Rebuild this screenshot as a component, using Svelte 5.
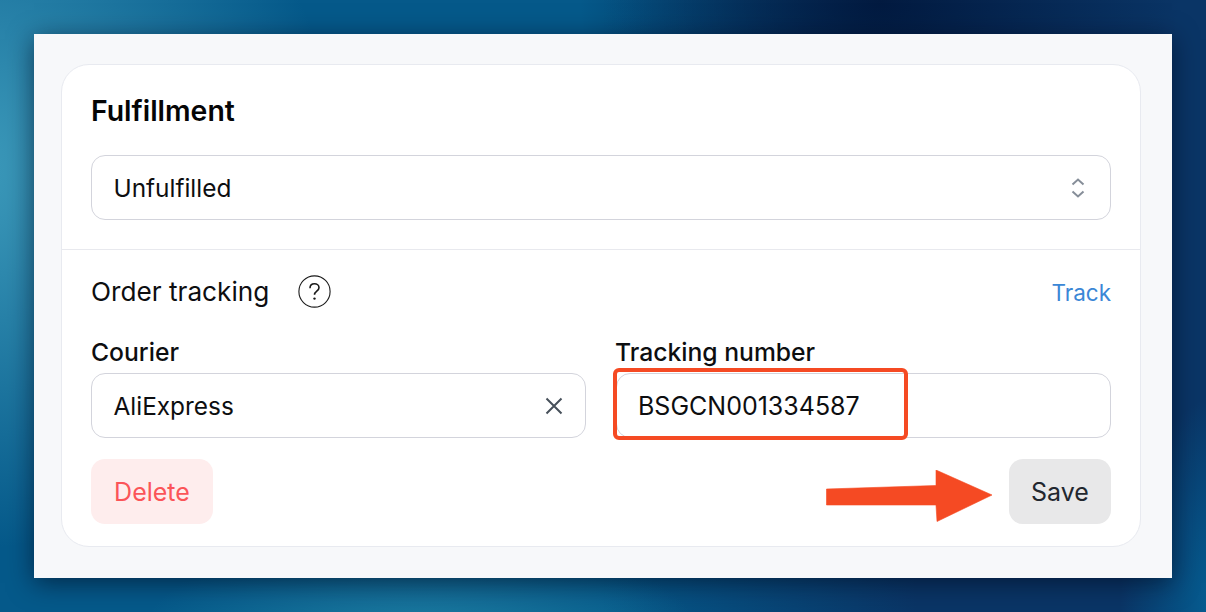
<script lang="ts">
  let status = $state('Unfulfilled');
  let courier = $state('AliExpress');
  let tracking = $state('BSGCN001334587');
</script>

<div class="page">
  <section class="panel">
    <div class="card">
      <div class="top">
        <h2>Fulfillment</h2>
        <div class="field select">
          <span>{status}</span>
          <svg width="16" height="22" viewBox="0 0 16 22" fill="none" stroke="#868e99" stroke-width="2">
            <path d="M2.5 7.500 8 2.500l5.500 5" />
            <path d="M2.5 14.500 8 19.500l5.500-5" />
          </svg>
        </div>
      </div>

      <div class="tracking">
        <div class="tracking-head">
          <div class="tracking-title">
            <span>Order tracking</span>
            <svg width="33" height="33" viewBox="0 0 33 33" fill="none" aria-label="Help">
              <circle cx="16.5" cy="16.5" r="15.6" stroke="#1a1a1a" stroke-width="1.1" />
              <path d="M12 13.2c0-2.8 2-4.4 4.500-4.400s4.500 1.600 4.500 3.900c0 3.400-4.500 3.500-4.500 7" stroke="#1a1a1a" stroke-width="1.6" />
              <circle cx="16.5" cy="23.6" r="1.2" fill="#1a1a1a" />
            </svg>
          </div>
          <a href="#track">Track</a>
        </div>

        <div class="columns">
          <div class="col">
            <span class="label">Courier</span>
            <div class="field">
              <span>{courier}</span>
              <svg class="clear" width="18" height="18" viewBox="0 0 18 18" fill="none" stroke="#47505a" stroke-width="2">
                <path d="M1.5 1.5l15 15M16.500 1.500l-15 15" />
              </svg>
            </div>
          </div>
          <div class="col">
            <span class="label second">Tracking number</span>
            <div class="field number"><span>{tracking}</span></div>
            <div class="highlight"></div>
          </div>
        </div>

        <div class="actions">
          <button class="delete">Delete</button>
          <div class="right">
            <svg class="arrow" width="168" height="52" viewBox="0 0 168 52">
              <path d="M1.500 19 111 15.500V0L167 25 112 51.500 111 35H1.500Z" fill="#f54a23" stroke="#f54a23" stroke-width="0.6" stroke-linejoin="round" />
            </svg>
            <button class="save">Save</button>
          </div>
        </div>
      </div>
    </div>
  </section>
</div>

<style>
  :global(body) {
    margin: 0;
  }

  .page {
    width: 1206px;
    height: 612px;
    box-sizing: border-box;
    padding: 34px;
    overflow: hidden;
    font-family: Inter, "Liberation Sans", sans-serif;
    color: #0d0e10;
    background:
      radial-gradient(ellipse 300px 260px at 880px 0px, #021a40 0%, rgba(2, 26, 64, 0) 100%),
      radial-gradient(ellipse 380px 380px at -40px 170px, #3f9dbd 0%, rgba(63, 157, 189, 0) 100%),
      radial-gradient(ellipse 280px 110px at 420px 640px, #1e7ea3 0%, rgba(30, 126, 163, 0) 100%),
      radial-gradient(ellipse 110px 220px at 1230px 612px, #04659a 0%, rgba(4, 101, 154, 0) 100%),
      linear-gradient(90deg, #05598a 0%, #05598a 50%, #0a3566 76%, #0a3566 100%);
  }

  .panel {
    box-sizing: border-box;
    width: 1138px;
    height: 544px;
    padding: 30px 31px 31px 27px;
    background: #f7f8fa;
    box-shadow: 0 5px 24px rgba(0, 10, 30, 0.6);
  }

  .card {
    height: 100%;
    box-sizing: border-box;
    background: #fff;
    border: 1px solid #e8eaf0;
    border-radius: 28px;
  }

  .top {
    padding: 29px 29px 29px;
    border-bottom: 1px solid #e8e9ee;
  }

  h2 {
    margin: 0 0 27px;
    font-size: 28.400px;
    line-height: 34px;
    font-weight: 600;
    color: #050506;
  }

  .field {
    display: flex;
    align-items: center;
    justify-content: space-between;
    box-sizing: border-box;
    height: 65px;
    padding: 1px 22px 0 21.5px;
    background: #fff;
    border: 1px solid #d3d4dc;
    border-radius: 14px;
    font-size: 24.400px;
    color: #0d0e10;
  }

  .number {
    padding-left: 21px;
    font-size: 25px;
  }

  .select svg {
    margin-right: 2px;
  }

  .tracking {
    padding: 24px 29px 0;
  }

  .tracking-head {
    display: flex;
    align-items: center;
    justify-content: space-between;
    height: 34px;
    margin-bottom: 29px;
  }

  .tracking-title {
    display: flex;
    align-items: center;
    gap: 29px;
    font-size: 26.200px;
    color: #0d0e10;
  }

  a {
    margin-top: 2px;
    font-size: 22.500px;
    color: #3b87d6;
    text-decoration: none;
  }

  .columns {
    display: grid;
    grid-template-columns: 495px 495px;
    gap: 30px;
  }

  .col {
    position: relative;
  }

  .label {
    display: block;
    margin-bottom: 6px;
    font-size: 24.700px;
    line-height: 30px;
    font-weight: 500;
    color: #0d0e10;
  }

  .second {
    margin-left: -1px;
  }

  .highlight {
    position: absolute;
    left: -3px;
    top: 31px;
    width: 295px;
    height: 72px;
    box-sizing: border-box;
    border: 4px solid #f54a23;
    border-radius: 6px;
  }

  .actions {
    display: flex;
    align-items: center;
    justify-content: space-between;
    margin-top: 21px;
  }

  .right {
    display: flex;
    align-items: center;
    gap: 16px;
  }

  .arrow {
    margin-top: 9px;
  }

  button {
    height: 65px;
    padding: 1px 0 0;
    border: none;
    border-radius: 14px;
    font-family: inherit;
    font-size: 25px;
  }

  .delete {
    width: 122px;
    background: #feeded;
    color: #fb5458;
  }

  .save {
    width: 102px;
    background: #e8e8e9;
    color: #22272f;
  }
</style>
